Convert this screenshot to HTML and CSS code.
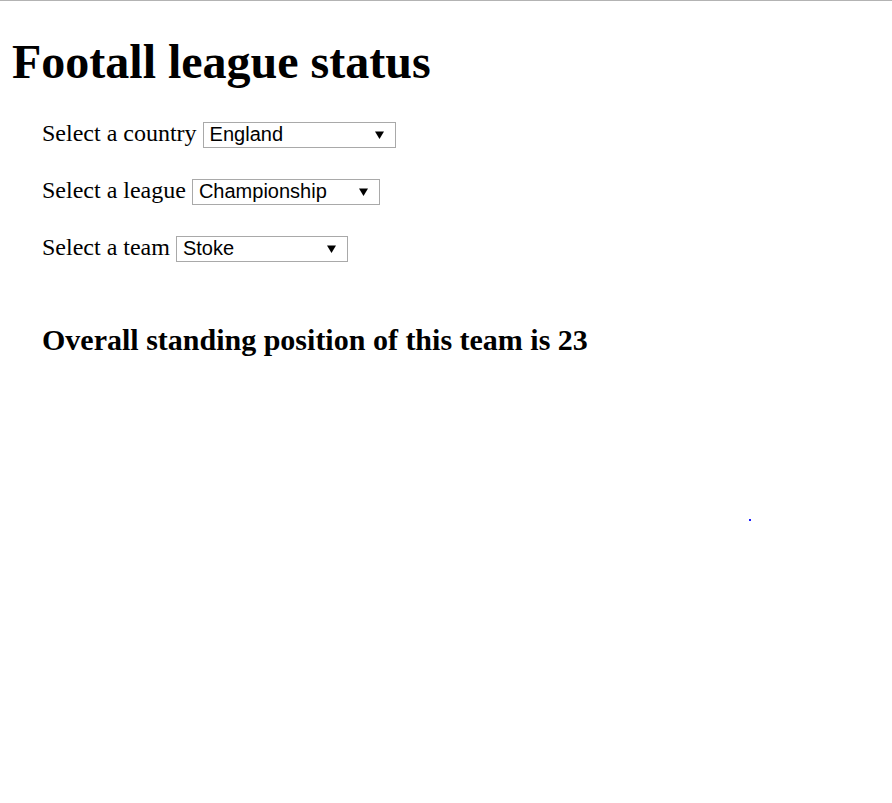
FILE: index.html
```html
<!DOCTYPE html>
<html lang="en">
<head>
<meta charset="utf-8">
<title>Footall league status</title>
<link rel="stylesheet" href="styles.css">
</head>
<body>
<div class="topline"></div>
<h1 class="title">Footall league status</h1>
<div class="form">
  <div class="row">
    <label class="label">Select a country</label>
    <div class="select w-country"><span class="value">England</span><svg class="arrow" width="9" height="8" viewBox="0 0 9 8"><path d="M0 0.5H9L4.5 8Z" fill="#000"/></svg></div>
  </div>
  <div class="row">
    <label class="label">Select a league</label>
    <div class="select w-league"><span class="value">Championship</span><svg class="arrow" width="9" height="8" viewBox="0 0 9 8"><path d="M0 0.5H9L4.5 8Z" fill="#000"/></svg></div>
  </div>
  <div class="row">
    <label class="label">Select a team</label>
    <div class="select w-team"><span class="value">Stoke</span><svg class="arrow" width="9" height="8" viewBox="0 0 9 8"><path d="M0 0.5H9L4.5 8Z" fill="#000"/></svg></div>
  </div>
  <h2 class="result">Overall standing position of this team is 23</h2>
</div>
<div class="dot"></div>
</body>
</html>
```
FILE: styles.css
```css
html, body {
  margin: 0;
  padding: 0;
  background: #fff;
}
body {
  font-family: "Liberation Serif", "Times New Roman", serif;
  color: #000;
  position: relative;
  min-height: 803px;
}
.topline {
  height: 1px;
  background: #b3b3b3;
}
.title {
  margin: 33px 0 0 12px;
  font-size: 48px;
  line-height: 56px;
  font-weight: bold;
}
.form {
  padding-left: 42px;
  margin-top: 32px;
}
.row {
  display: flex;
  align-items: center;
  gap: 6px;
  height: 26px;
  margin-bottom: 31px;
}
.label {
  font-size: 24px;
  line-height: 26px;
  position: relative;
  top: -2px;
}
.select {
  box-sizing: border-box;
  height: 26px;
  border: 1px solid #a9a9a9;
  display: flex;
  align-items: center;
  justify-content: space-between;
  padding: 0 11px 0 6px;
  font-family: "Liberation Sans", Arial, sans-serif;
  font-size: 20px;
  line-height: 24px;
}
.value {
  position: relative;
  top: -1px;
}
.w-country { width: 193px; }
.w-league { width: 188px; }
.w-team { width: 172px; }
.arrow {
  display: block;
  margin-top: 0;
}
.result {
  margin: 61px 0 0 0;
  font-size: 30px;
  line-height: 34px;
  font-weight: bold;
}
.dot {
  position: absolute;
  left: 749px;
  top: 519px;
  width: 2px;
  height: 2px;
  background: #1a1aff;
}
```
